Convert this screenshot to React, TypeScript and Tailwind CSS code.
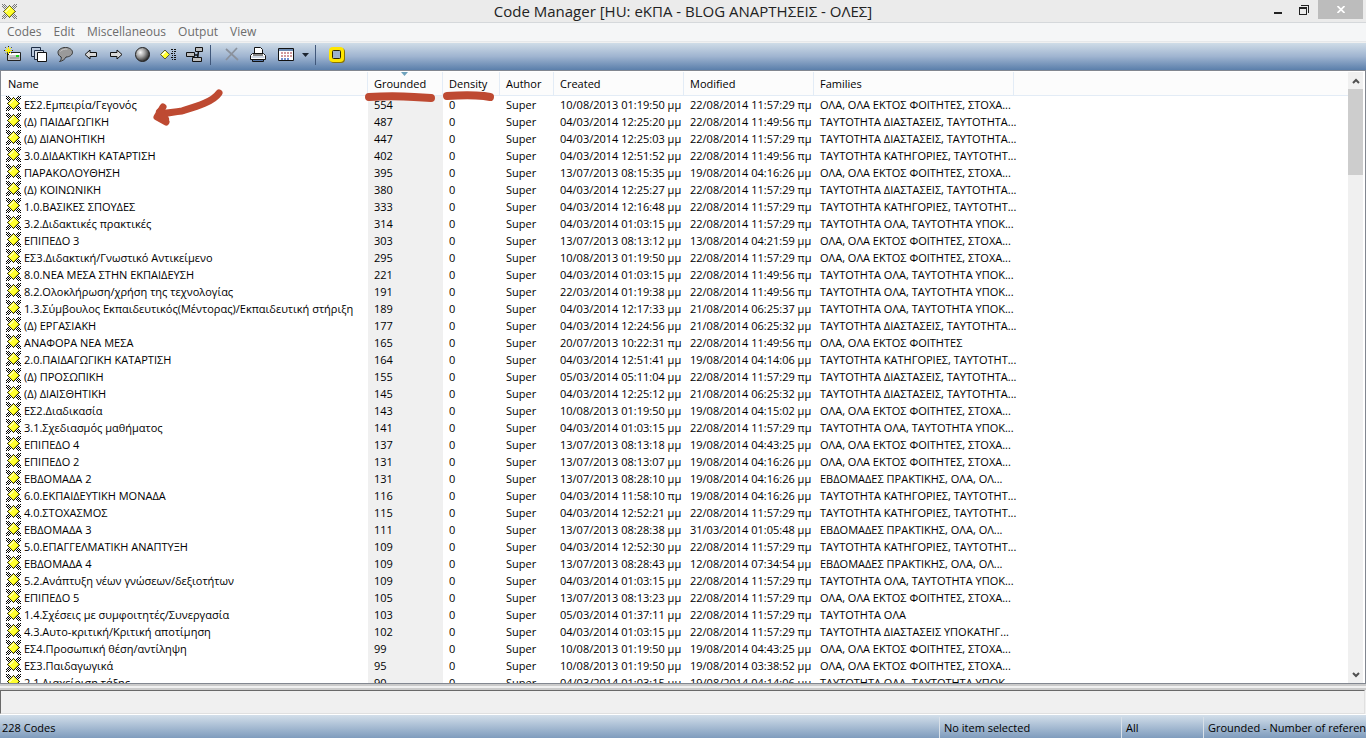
import React from 'react';

type Row = [string, number, string, string, string];

const F_OLA = 'ΟΛΑ, ΟΛΑ ΕΚΤΟΣ ΦΟΙΤΗΤΕΣ, ΣΤΟΧΑ...';
const F_DIA = 'ΤΑΥΤΟΤΗΤΑ ΔΙΑΣΤΑΣΕΙΣ, ΤΑΥΤΟΤΗΤΑ...';
const F_KAT = 'ΤΑΥΤΟΤΗΤΑ ΚΑΤΗΓΟΡΙΕΣ, ΤΑΥΤΟΤΗΤ...';
const F_YPO = 'ΤΑΥΤΟΤΗΤΑ ΟΛΑ, ΤΑΥΤΟΤΗΤΑ ΥΠΟΚ...';
const F_EVD = 'ΕΒΔΟΜΑΔΕΣ ΠΡΑΚΤΙΚΗΣ, ΟΛΑ, ΟΛ...';

const rows: Row[] = [
  ['ΕΣ2.Εμπειρία/Γεγονός', 554, '10/08/2013 01:19:50 μμ', '22/08/2014 11:57:29 πμ', F_OLA],
  ['(Δ) ΠΑΙΔΑΓΩΓΙΚΗ', 487, '04/03/2014 12:25:20 μμ', '22/08/2014 11:49:56 πμ', F_DIA],
  ['(Δ) ΔΙΑΝΟΗΤΙΚΗ', 447, '04/03/2014 12:25:03 μμ', '22/08/2014 11:57:29 πμ', F_DIA],
  ['3.0.ΔΙΔΑΚΤΙΚΗ ΚΑΤΑΡΤΙΣΗ', 402, '04/03/2014 12:51:52 μμ', '22/08/2014 11:49:56 πμ', F_KAT],
  ['ΠΑΡΑΚΟΛΟΥΘΗΣΗ', 395, '13/07/2013 08:15:35 μμ', '19/08/2014 04:16:26 μμ', F_OLA],
  ['(Δ) ΚΟΙΝΩΝΙΚΗ', 380, '04/03/2014 12:25:27 μμ', '22/08/2014 11:57:29 πμ', F_DIA],
  ['1.0.ΒΑΣΙΚΕΣ ΣΠΟΥΔΕΣ', 333, '04/03/2014 12:16:48 μμ', '22/08/2014 11:57:29 πμ', F_KAT],
  ['3.2.Διδακτικές πρακτικές', 314, '04/03/2014 01:03:15 μμ', '22/08/2014 11:57:29 πμ', F_YPO],
  ['ΕΠΙΠΕΔΟ 3', 303, '13/07/2013 08:13:12 μμ', '13/08/2014 04:21:59 μμ', F_OLA],
  ['ΕΣ3.Διδακτική/Γνωστικό Αντικείμενο', 295, '10/08/2013 01:19:50 μμ', '22/08/2014 11:57:29 πμ', F_OLA],
  ['8.0.ΝΕΑ ΜΕΣΑ ΣΤΗΝ ΕΚΠΑΙΔΕΥΣΗ', 221, '04/03/2014 01:03:15 μμ', '22/08/2014 11:49:56 πμ', F_YPO],
  ['8.2.Ολοκλήρωση/χρήση της τεχνολογίας', 191, '22/03/2014 01:19:38 μμ', '22/08/2014 11:49:56 πμ', F_YPO],
  ['1.3.Σύμβουλος Εκπαιδευτικός(Μέντορας)/Εκπαιδευτική στήριξη', 189, '04/03/2014 12:17:33 μμ', '21/08/2014 06:25:37 μμ', F_YPO],
  ['(Δ) ΕΡΓΑΣΙΑΚΗ', 177, '04/03/2014 12:24:56 μμ', '21/08/2014 06:25:32 μμ', F_DIA],
  ['ΑΝΑΦΟΡΑ ΝΕΑ ΜΕΣΑ', 165, '20/07/2013 10:22:31 πμ', '22/08/2014 11:49:56 πμ', 'ΟΛΑ, ΟΛΑ ΕΚΤΟΣ ΦΟΙΤΗΤΕΣ'],
  ['2.0.ΠΑΙΔΑΓΩΓΙΚΗ ΚΑΤΑΡΤΙΣΗ', 164, '04/03/2014 12:51:41 μμ', '19/08/2014 04:14:06 μμ', F_KAT],
  ['(Δ) ΠΡΟΣΩΠΙΚΗ', 155, '05/03/2014 05:11:04 μμ', '22/08/2014 11:57:29 πμ', F_DIA],
  ['(Δ) ΔΙΑΙΣΘΗΤΙΚΗ', 145, '04/03/2014 12:25:12 μμ', '21/08/2014 06:25:32 μμ', F_DIA],
  ['ΕΣ2.Διαδικασία', 143, '10/08/2013 01:19:50 μμ', '19/08/2014 04:15:02 μμ', F_OLA],
  ['3.1.Σχεδιασμός μαθήματος', 141, '04/03/2014 01:03:15 μμ', '22/08/2014 11:57:29 πμ', F_YPO],
  ['ΕΠΙΠΕΔΟ 4', 137, '13/07/2013 08:13:18 μμ', '19/08/2014 04:43:25 μμ', F_OLA],
  ['ΕΠΙΠΕΔΟ 2', 131, '13/07/2013 08:13:07 μμ', '19/08/2014 04:16:26 μμ', F_OLA],
  ['ΕΒΔΟΜΑΔΑ 2', 131, '13/07/2013 08:28:10 μμ', '19/08/2014 04:16:26 μμ', F_EVD],
  ['6.0.ΕΚΠΑΙΔΕΥΤΙΚΗ ΜΟΝΑΔΑ', 116, '04/03/2014 11:58:10 πμ', '19/08/2014 04:16:26 μμ', F_KAT],
  ['4.0.ΣΤΟΧΑΣΜΟΣ', 115, '04/03/2014 12:52:21 μμ', '22/08/2014 11:57:29 πμ', F_KAT],
  ['ΕΒΔΟΜΑΔΑ 3', 111, '13/07/2013 08:28:38 μμ', '31/03/2014 01:05:48 μμ', F_EVD],
  ['5.0.ΕΠΑΓΓΕΛΜΑΤΙΚΗ ΑΝΑΠΤΥΞΗ', 109, '04/03/2014 12:52:30 μμ', '22/08/2014 11:57:29 πμ', F_KAT],
  ['ΕΒΔΟΜΑΔΑ 4', 109, '13/07/2013 08:28:43 μμ', '12/08/2014 07:34:54 μμ', F_EVD],
  ['5.2.Ανάπτυξη νέων γνώσεων/δεξιοτήτων', 109, '04/03/2014 01:03:15 μμ', '22/08/2014 11:57:29 πμ', F_YPO],
  ['ΕΠΙΠΕΔΟ 5', 105, '13/07/2013 08:13:23 μμ', '22/08/2014 11:57:29 πμ', F_OLA],
  ['1.4.Σχέσεις με συμφοιτητές/Συνεργασία', 103, '05/03/2014 01:37:11 μμ', '22/08/2014 11:57:29 πμ', 'ΤΑΥΤΟΤΗΤΑ ΟΛΑ'],
  ['4.3.Αυτο-κριτική/Κριτική αποτίμηση', 102, '04/03/2014 01:03:15 μμ', '22/08/2014 11:57:29 πμ', 'ΤΑΥΤΟΤΗΤΑ ΔΙΑΣΤΑΣΕΙΣ ΥΠΟΚΑΤΗΓ...'],
  ['ΕΣ4.Προσωπική θέση/αντίληψη', 99, '10/08/2013 01:19:50 μμ', '19/08/2014 04:43:25 μμ', F_OLA],
  ['ΕΣ3.Παιδαγωγικά', 95, '10/08/2013 01:19:50 μμ', '19/08/2014 03:38:52 μμ', F_OLA],
  ['2.1.Διαχείριση τάξης', 90, '04/03/2014 01:03:15 μμ', '19/08/2014 04:14:06 μμ', F_YPO],
];

// Pixel runs of the code symbol: hatched arms, diamond outline and diamond body.
const pixels = (test: (dx: number, dy: number, x: number, y: number) => boolean) => {
  let d = '';
  for (let y = 0; y < 15; y++) {
    for (let x = 0; x < 15; x++) {
      if (test(Math.abs(x - 7), Math.abs(y - 7), x, y)) {
        d += `M${x} ${y}h1v1h-1z`;
      }
    }
  }
  return d;
};

const arms = pixels((dx, dy) => (dx + dy) % 2 === 0 && dx + dy > 7 && Math.abs(dx - dy) <= 2 && dx > 2 && dy > 2);
const outline = pixels((dx, dy) => dx + dy === 6);
const body = pixels((dx, dy) => dx + dy < 6);
const shine = pixels((dx, dy, x, y) => dx + dy < 5 && dx + dy > 2 && x < 8 && y < 8);
const shade = pixels((dx, dy, x, y) => dx + dy === 5 && x > 6 && y > 6);

function CodeIcon({ soft = false }: { soft?: boolean }) {
  return (
    <svg className="block h-[15px] w-[15px] shrink-0" viewBox="0 0 15 15" shapeRendering="crispEdges" aria-hidden="true">
      <path d={arms} fill={soft ? '#777' : '#000'} />
      <path d={outline} fill={soft ? '#66663c' : '#2c2c14'} />
      <path d={body} fill="#ffff30" />
      <path d={shine} fill="#ffffa0" />
      <path d={shade} fill="#d2d200" />
    </svg>
  );
}

function Tool({ label, children }: { label: string; children: React.ReactNode }) {
  return (
    <button aria-label={label} className="flex h-6 w-[26px] shrink-0 items-center justify-center">
      <svg className="block h-[18px] w-[18px]" viewBox="0 0 18 18" fill="none" aria-hidden="true">
        {children}
      </svg>
    </button>
  );
}

function Toolbar() {
  return (
    <div role="toolbar" className="flex h-[27px] shrink-0 items-start bg-linear-to-b from-[#cfdce7] via-[#9fb4d0] to-[#5b7fab]">
      <Tool label="New code">
        <path d="M3.500 6.500h13v8h-13z" fill="#c8c8c8" stroke="#222" />
        <path d="M4 7h12v2H4z" fill="#fff" />
        <path d="M12 9h3v2h-3z" fill="#20d020" />
        <path d="M6 12h9" stroke="#888" />
        <path d="M4.500 0v9M0 4.500h9M1 1l7 7M8 1L1 8" stroke="#222" strokeDasharray="1 1" />
        <path d="M4.500 1v7M1 4.500h7M2 2l5 5M7 2L2 7" stroke="#fff200" />
      </Tool>
      <Tool label="Duplicate">
        <path d="M1.500 1.500h9v9h-9z" fill="#b9c8dc" stroke="#1c2c44" />
        <path d="M4.500 4.500h9v9h-9z" fill="#dadfe6" stroke="#1c2c44" />
        <path d="M7.500 6.500h9v9h-9z" fill="#fff" stroke="#111" />
      </Tool>
      <Tool label="Comment">
        <path d="M9.500 1.500c4 0 7 2.200 7 4.800s-3 4.700-6.500 4.700c-1 2.300-3.500 4-6.500 4.500 1.500-1.200 2-2.800 1.700-4.500C3 10 2 8.300 2 6.300c0-2.600 3.500-4.800 7.500-4.800z" fill="#9a9a9a" stroke="#333" />
        <path d="M4.500 5.500c1-2 4-2.500 7-2.500" stroke="#c8c8c8" />
      </Tool>
      <Tool label="Back">
        <path d="M3 8.500l5-4.500v2.500h6.500v4H8V13z" fill="#d8d8d8" stroke="#111" />
      </Tool>
      <Tool label="Forward">
        <path d="M14 8.500L9 4v2.500H2.500v4H9V13z" fill="#d8d8d8" stroke="#111" />
      </Tool>
      <Tool label="Codes network">
        <defs>
          <radialGradient id="ball" cx="0.35" cy="0.35" r="0.65">
            <stop offset="0" stopColor="#f8f8f8" />
            <stop offset="0.5" stopColor="#a0a0a0" />
            <stop offset="1" stopColor="#303030" />
          </radialGradient>
        </defs>
        <circle cx="8.500" cy="8.500" r="7" fill="url(#ball)" stroke="#222" />
      </Tool>
      <Tool label="List codes">
        <path d="M5 4l4.500 4.500L5 13 .500 8.500z" fill="#ffff30" stroke="#5a5a38" />
        <path d="M5 5L1.500 8.500l1 1L6 6z" fill="#fff" />
        <g shapeRendering="crispEdges" fill="#111">
          <path d="M11 3h2v1h-2zM14 3h2v1h-2zM12 5h1v1h-1zM14 5h2v1h-2zM11 7h2v1h-2zM14 7h1v1h-1zM12 9h1v1h-1zM14 9h2v1h-2zM11 11h2v1h-2zM14 11h2v1h-2zM12 13h1v1h-1zM14 13h2v1h-2z" />
        </g>
      </Tool>
      <Tool label="Tree">
        <path d="M6 9h6M12.500 5l-1 8" stroke="#111" strokeWidth="1.500" />
        <g fill="#bdbdbd" stroke="#111">
          <path d="M9.500 1.500h7v4h-7z" />
          <path d="M.500 6.500h8v4h-8z" />
          <path d="M6.500 11.500h9v4h-9z" />
        </g>
      </Tool>
      <div className="mx-[2px] my-[2px] h-5 w-px bg-[#40577a]" />
      <div className="w-[6px]" />
      <Tool label="Delete">
        <path d="M3 3l12 11M14 2L3 14" stroke="#8a919c" strokeWidth="1.700" />
      </Tool>
      <Tool label="Print">
        <path d="M5.500 1.500h6l2 2v5h-8z" fill="#fff" stroke="#111" />
        <path d="M3.500 7.500h11l2 2v4h-15v-4z" fill="#fff" stroke="#111" />
        <path d="M4 9h10" stroke="#111" />
        <path d="M2.500 11h13" stroke="#9fb0c8" />
        <path d="M3.500 13.500h11v2h-11z" fill="#5878a8" stroke="#111" />
      </Tool>
      <div className="w-[2px]" />
      <Tool label="Columns">
        <path d="M1.500 2.500h15v12h-15z" fill="#fff" stroke="#111" />
        <path d="M2 4h14" stroke="#6a88b0" strokeWidth="2" />
        <path d="M4 7h11M4 10h11" stroke="#cf9a9e" strokeWidth="2" strokeDasharray="2 1" />
        <path d="M4 13h9" stroke="#6f8fd0" strokeWidth="2" strokeDasharray="2 1" />
      </Tool>
      <button aria-label="Column options" className="flex h-6 w-3 items-center justify-center">
        <svg className="block h-1 w-[7px]" viewBox="0 0 7 4" aria-hidden="true"><path d="M0 0h7L3.500 4z" fill="#1c2430" /></svg>
      </button>
      <div className="mx-[4px] my-[2px] h-5 w-px bg-[#40577a]" />
      <div className="w-[4px]" />
      <Tool label="Help">
        <rect x="2" y="2" width="15" height="15" rx="4" fill="#8a7400" />
        <rect x="1" y="1" width="15" height="15" rx="4" fill="#ffe600" />
        <rect x="4.500" y="4.500" width="8" height="8" rx="1" fill="#9db2ce" stroke="#2c2600" />
      </Tool>
    </div>
  );
}

const header = 'border-r border-b border-[#e3ecf6] p-0 pl-[6px] text-left font-normal';
const cell = 'p-0 pl-[6px]';

export default function App() {
  return (
    <div className="flex h-screen flex-col overflow-hidden bg-[#f0f0f0] font-['Open_Sans','Noto_Sans',sans-serif] text-[11px] text-black">
      <header className="flex h-[23px] shrink-0 items-start border-b border-[#d5d8db] bg-[#ebebeb]">
        <div className="w-[102px] pt-1 pl-[2px]"><CodeIcon soft /></div>
        <h1 className="flex-1 text-center text-[15px] leading-[23px] text-[#222]">Code Manager [HU: eΚΠΑ - BLOG ΑΝΑΡΤΗΣΕΙΣ - ΟΛΕΣ]</h1>
        <div className="flex">
          <button aria-label="Minimize" className="flex h-[19px] w-7 items-center justify-center">
            <svg className="h-[18px] w-2" viewBox="0 0 8 18"><path d="M0 11h8v2H0z" fill="#222" /></svg>
          </button>
          <button aria-label="Restore" className="flex h-[19px] w-6 items-center justify-center">
            <svg className="h-[10px] w-[10px]" viewBox="0 0 10 10" shapeRendering="crispEdges"><path d="M2 0h8v8H9V1H2zM0 2h8v8H0zM1 4v5h6V4z" fill="#222" fillRule="evenodd" /></svg>
          </button>
          <button aria-label="Close" className="mr-[3px] ml-[2px] flex h-[19px] w-[45px] items-center justify-center bg-[#bcbcbc]">
            <svg className="h-[7px] w-2" viewBox="0 0 8 7"><path d="M.500 0l7 7M7.500 0l-7 7" stroke="#fff" strokeWidth="1.700" /></svg>
          </button>
        </div>
      </header>
      <nav className="flex h-[19px] shrink-0 items-end gap-3 border-b border-[#e6e8ea] bg-[#f5f6f7] pl-[7px] text-[12px] leading-[18px] text-[#6d6d6d]">
        <button>Codes</button>
        <button>Edit</button>
        <button>Miscellaneous</button>
        <button>Output</button>
        <button>View</button>
      </nav>
      <div className="h-px shrink-0 bg-[#f0f0f0]" />
      <Toolbar />
      <main className="relative flex min-h-0 flex-1 overflow-hidden border border-[#828790] bg-white pt-px">
        <div className="min-w-0 flex-1 overflow-hidden">
          <table className="w-full table-fixed border-separate border-spacing-0 whitespace-nowrap">
            <colgroup>
              <col className="w-[367px]" />
              <col className="w-[75px]" />
              <col className="w-[57px]" />
              <col className="w-[54px]" />
              <col className="w-[130px]" />
              <col className="w-[130px]" />
              <col className="w-[200px]" />
              <col />
            </colgroup>
            <thead>
              <tr className="h-[24px] bg-[#fcfcfc] leading-[22px]">
                <th className="border-r border-b border-[#e3ecf6] p-0 pl-[7px] text-left font-normal">Name</th>
                <th className={`${header} relative`}>
                  <svg className="absolute top-0 left-[33px] h-[4px] w-[7px]" viewBox="0 0 7 4" aria-hidden="true"><path d="M0 0h7L3.500 4z" fill="#6fa3bd" /></svg>
                  Grounded
                </th>
                <th className={header}>Density</th>
                <th className={header}>Author</th>
                <th className={header}>Created</th>
                <th className={header}>Modified</th>
                <th className={header}>Families</th>
                <th className="border-b border-[#e3ecf6] p-0" />
              </tr>
            </thead>
            <tbody className="leading-[17px]">
              {rows.map(([name, grounded, created, modified, families]) => (
                <tr key={name} className="h-[17px]">
                  <td className="p-0">
                    <div className="flex h-[17px] items-start gap-[3px] pl-[5px]"><CodeIcon /><span>{name}</span></div>
                  </td>
                  <td className={`${cell} bg-[#f0f0f0]`}>{grounded}</td>
                  <td className={cell}>0</td>
                  <td className={cell}>Super</td>
                  <td className={cell}>{created}</td>
                  <td className={cell}>{modified}</td>
                  <td className={cell}>{families}</td>
                  <td className="p-0" />
                </tr>
              ))}
            </tbody>
          </table>
        </div>
        <div className="mr-[2px] flex w-[15px] shrink-0 flex-col bg-[#f0f0f0]">
          <button aria-label="Scroll up" className="flex h-[17px] items-center justify-center">
            <svg className="h-[6px] w-2" viewBox="0 0 8 6" fill="none"><path d="M1 5l3-3 3 3" stroke="#505050" strokeWidth="2" /></svg>
          </button>
          <div className="h-[86px] bg-[#cdcdcd]" />
          <div className="flex-1" />
          <button aria-label="Scroll down" className="flex h-[17px] items-center justify-center">
            <svg className="h-[6px] w-2" viewBox="0 0 8 6" fill="none"><path d="M1 1l3 3 3-3" stroke="#505050" strokeWidth="2" /></svg>
          </button>
        </div>
        <svg className="pointer-events-none absolute top-0 left-0 h-[60px] w-[520px]" viewBox="1 71 520 60" fill="none" stroke="#be4a32" strokeLinecap="round" strokeLinejoin="round" aria-hidden="true">
          <path d="M219 93C213 102 195 107 182 111C174 112 168 113 160 114" strokeWidth="7" />
          <path d="M163 107L157 117L166 122" strokeWidth="7" />
          <path d="M160 112l5 7" strokeWidth="8" />
          <path d="M369 97C385 96 400 96 414 97L431 98" strokeWidth="8" />
          <path d="M447 96C460 95 475 95 484 96L490 97" strokeWidth="8" />
        </svg>
      </main>
      <div className="h-[6px] shrink-0 border-y-2 border-[#cbcbcb] bg-[#f0f0f0]" />
      <div className="mr-[1px] h-6 shrink-0 border-t border-r border-b border-l border-t-[#696969] border-r-[#e0e0e0] border-b-[#e0e0e0] border-l-[#696969] bg-[#f0f0f0]" />
      <div className="h-px shrink-0 bg-white" />
      <footer className="flex h-[23px] shrink-0 items-end overflow-hidden bg-linear-to-b from-[#d3dfea] to-[#7f9cbd] leading-[21px] whitespace-nowrap">
        <div className="flex-1 pl-[2px]">228 Codes</div>
        <div className="w-[182px] border-l border-[#d8e0e8] pl-1">No item selected</div>
        <div className="w-[82px] border-l border-[#d8e0e8] pl-1">All</div>
        <div className="w-[163px] overflow-hidden border-l border-[#d8e0e8] pl-1">Grounded - Number of references</div>
      </footer>
    </div>
  );
}
